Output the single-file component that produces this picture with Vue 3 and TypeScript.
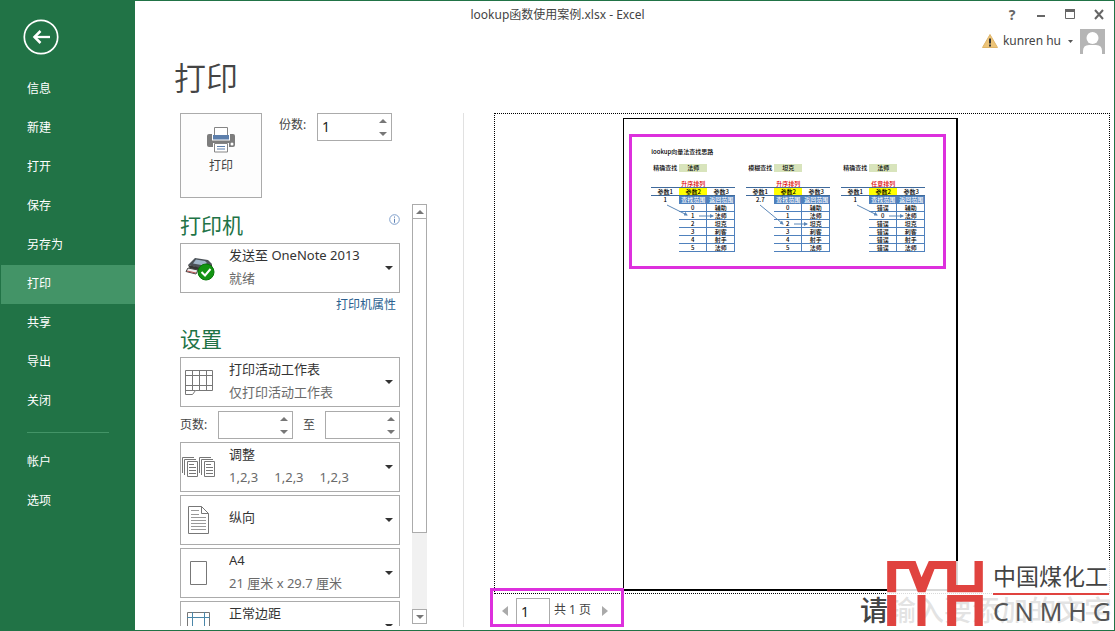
<script setup lang="ts">
import { ref } from 'vue'

interface Lookup {
  mode: string
  result: string
  order: string
  needle: string
  keys: string[]
  arrow: string
  hit: string
}

const menu = ['信息', '新建', '打开', '保存', '另存为', '打印', '共享', '导出', '关闭']
const footerMenu = ['帐户', '选项']
const active = ref('打印')

const copies = ref(1)
const pageFrom = ref<number | ''>('')
const pageTo = ref<number | ''>('')
const currentPage = ref('1')

const roles = ['辅助', '法师', '坦克', '刺客', '射手', '法师']
const lookups: Lookup[] = [
  {
    mode: '精确查找', result: '法师', order: '升序排列', needle: '1',
    keys: ['0', '1', '2', '3', '4', '5'],
    arrow: 'M16 41L36 51', hit: 'M48 52H62',
  },
  {
    mode: '模糊查找', result: '坦克', order: '升序排列', needle: '2.7',
    keys: ['0', '1', '2', '3', '4', '5'],
    arrow: 'M14 41L37 60', hit: 'M48 60H61',
  },
  {
    mode: '精确查找', result: '法师', order: '任意排列', needle: '1',
    keys: ['错误', '0', '错误', '错误', '错误', '错误'],
    arrow: 'M16 41L36 51', hit: 'M48 52H62',
  },
]
</script>

<template>
  <div class="window">
    <header class="titlebar">
      <span class="doc-title">lookup函数使用案例.xlsx - Excel</span>
      <div class="controls">
        <button aria-label="帮助" class="help">?</button>
        <button aria-label="最小化"><svg width="11" height="11" viewBox="0 0 11 11"><path d="M1 7h8" stroke="#666" stroke-width="2" /></svg></button>
        <button aria-label="最大化"><svg width="11" height="11" viewBox="0 0 11 11"><path d="M.5 .5h9v9H.5z" fill="none" stroke="#666" /><path d="M0 1.5h10" stroke="#666" stroke-width="3" /></svg></button>
        <button aria-label="关闭窗口"><svg width="11" height="11" viewBox="0 0 11 11"><path d="M1 1l8 9M9 1l-8 9" stroke="#666" stroke-width="2" /></svg></button>
      </div>
    </header>

    <nav class="sidebar">
      <button class="back" aria-label="返回">
        <svg width="36" height="36" viewBox="0 0 36 36" fill="none" stroke="#fff">
          <circle cx="18" cy="18" r="16.700" stroke-width="1.700" />
          <path d="M27 18H11" stroke-width="2.300" />
          <path d="M17.500 12l-6 6 6 6" stroke-width="2.500" />
        </svg>
      </button>
      <button v-for="m in menu" :key="m" class="nav-item" :class="{ active: m === active }" @click="active = m">{{ m }}</button>
      <hr />
      <button v-for="m in footerMenu" :key="m" class="nav-item" @click="active = m">{{ m }}</button>
    </nav>

    <div class="account">
      <svg width="16" height="14" viewBox="0 0 16 14">
        <path d="M8 .5L15.500 13.500H.5z" fill="#edc478" stroke="#dfb468" />
        <path d="M8 4.500v5M8 10.500v2" stroke="#333" stroke-width="2" />
      </svg>
      <button class="user">kunren hu<svg width="5" height="3" viewBox="0 0 5 3"><path d="M0 0h5L2.500 3z" fill="#555" /></svg></button>
      <svg width="25" height="25" viewBox="0 0 25 25">
        <path d="M0 0h25v25H0z" fill="#b5b5b5" />
        <circle cx="12.500" cy="9" r="6" fill="#fff" />
        <path d="M3 25v-3q0-6 6-6h7q6 0 6 6v3z" fill="#fff" />
      </svg>
    </div>

    <main>
      <h1>打印</h1>
      <div class="content">
        <section class="settings">
          <div class="top">
            <button class="print">
              <svg width="28" height="26" viewBox="0 0 28 26">
                <rect y="7" width="28" height="13" rx="2" fill="#7d7d7d" />
                <path d="M5 6h18v7.500H5z" fill="#fff" />
                <path d="M7.500 .5h13v9h-13z" fill="#fff" stroke="#858585" />
                <path d="M6 8h16v4.500H6z" fill="#5d7fac" />
                <path d="M6 16h16v10H6z" fill="#fff" />
                <path d="M7.500 16.500h13v8.500h-13z" fill="#fff" stroke="#858585" />
                <path d="M10 19.500h8M10 22h8" stroke="#5d7fac" />
                <circle cx="25" cy="17" r="1.500" fill="#fff" />
              </svg>
              <span>打印</span>
            </button>
            <label for="copies">份数:</label>
            <div class="spin">
              <input id="copies" v-model="copies" type="number" min="1" />
              <div class="steps">
                <button aria-label="增加份数" @click="copies++"><i class="up"></i></button>
                <button aria-label="减少份数" @click="copies--"><i class="down"></i></button>
              </div>
            </div>
          </div>

          <div class="scroller">
            <div class="options">
              <div class="heading">
                <h2>打印机</h2>
                <svg width="11" height="11" viewBox="0 0 11 11">
                  <circle cx="5.500" cy="5.500" r="4.800" fill="#fff" stroke="#7f9fcb" />
                  <path d="M5.500 2.500v1.200M5.500 4.800v4" stroke="#5f83b5" />
                </svg>
              </div>
              <div class="card">
                <div class="icon">
                  <svg width="32" height="26" viewBox="0 0 32 26">
                    <path d="M12 3l13 2 4 4-6 6L5 10z" fill="#4b5157" />
                    <path d="M13 4.500l9 1.500 2 2-3 2.500L10 8.500z" fill="#9fb4c8" />
                    <path d="M5 10l18 4 6-5v4l-5 5L7 14z" fill="#353535" />
                    <path d="M5 13l10 2-2 4-10-2.500z" fill="#eee" stroke="#444" />
                    <path d="M4 16l9 2" stroke="#b55" />
                    <circle cx="23" cy="17" r="8" fill="#129412" stroke="#087808" />
                    <path d="M18.500 17l3.500 3.500 5.500-6.500" fill="none" stroke="#fff" stroke-width="2" />
                  </svg>
                </div>
                <div class="text">
                  <select aria-label="打印机"><option>发送至 OneNote 2013</option></select>
                  <span>就绪</span>
                </div>
                <i class="caret"></i>
              </div>
              <div class="link-row"><a href="#">打印机属性</a></div>

              <div class="heading"><h2>设置</h2></div>
              <div class="stack">
                <div class="card">
                  <div class="icon">
                    <svg width="30" height="28" viewBox="0 0 30 28" fill="none" stroke="#777">
                      <path d="M1.500 2.500h27v20h-17l-3 4h-7zM1.500 22.500h10M1.500 7.500h27M1.500 17.500h27M8.500 2.500v20M15.500 2.500v20M22.500 2.500v20" />
                    </svg>
                  </div>
                  <div class="text">
                    <select aria-label="打印范围"><option>打印活动工作表</option></select>
                    <span>仅打印活动工作表</span>
                  </div>
                  <i class="caret"></i>
                </div>

                <div class="pages">
                  <label for="from">页数:</label>
                  <div class="spin">
                    <input id="from" v-model="pageFrom" type="number" />
                    <div class="steps">
                      <button aria-label="增加起始页"><i class="up"></i></button>
                      <button aria-label="减少起始页"><i class="down"></i></button>
                    </div>
                  </div>
                  <label for="to" class="to">至</label>
                  <div class="spin">
                    <input id="to" v-model="pageTo" type="number" />
                    <div class="steps">
                      <button aria-label="增加结束页"><i class="up"></i></button>
                      <button aria-label="减少结束页"><i class="down"></i></button>
                    </div>
                  </div>
                </div>

                <div class="card">
                  <div class="icon">
                    <svg width="34" height="22" viewBox="0 0 34 22" fill="none" stroke="#777">
                      <path d="M.5 17V1.500H12M2.500 19V3.500H14M17.500 17V1.500H29M19.500 19V3.500H31" />
                      <path d="M5.500 5.500h10v15h-10zM22.500 5.500h10v15h-10z" />
                      <path d="M7 8.500h5M7 11.500h7M7 14.500h7M7 17.500h7M24 8.500h5M24 11.500h7M24 14.500h7M24 17.500h7" />
                    </svg>
                  </div>
                  <div class="text">
                    <select aria-label="调整"><option>调整</option></select>
                    <div class="groups"><span>1,2,3</span><span>1,2,3</span><span>1,2,3</span></div>
                  </div>
                  <i class="caret"></i>
                </div>

                <div class="card">
                  <div class="icon">
                    <svg width="22" height="28" viewBox="0 0 22 28" fill="none" stroke="#777">
                      <path d="M.5 .5h13l7 7v20H.5zM13.500 .5v7h7" />
                      <path d="M3 4.500h8M3 8.500h8M3 11.500h15M3 14.500h15M3 17.500h15M3 20.500h15M3 23.500h15" stroke="#999" />
                    </svg>
                  </div>
                  <div class="text single">
                    <select aria-label="方向"><option>纵向</option></select>
                  </div>
                  <i class="caret"></i>
                </div>

                <div class="card">
                  <div class="icon">
                    <svg width="18" height="24" viewBox="0 0 18 24"><path d="M.5 .5h16v23H.5z" fill="#fff" stroke="#777" /></svg>
                  </div>
                  <div class="text">
                    <select aria-label="纸张大小"><option>A4</option></select>
                    <span>21 厘米 x 29.7 厘米</span>
                  </div>
                  <i class="caret"></i>
                </div>

                <div class="card">
                  <div class="icon">
                    <svg width="24" height="28" viewBox="0 0 24 28" fill="none">
                      <path d="M.5 .5h22v27H.5z" stroke="#777" />
                      <path d="M5.500 0v28M17.500 0v28M0 5.500h23M0 22.500h23" stroke="#4a86a8" />
                    </svg>
                  </div>
                  <div class="text">
                    <select aria-label="边距"><option>正常边距</option></select>
                  </div>
                  <i class="caret"></i>
                </div>
              </div>
            </div>

            <div class="scrollbar">
              <button aria-label="向上滚动"><i class="up"></i></button>
              <div class="thumb"></div>
              <div class="track"></div>
              <button aria-label="向下滚动"><i class="down"></i></button>
            </div>
          </div>
        </section>

        <section class="preview">
          <div class="stage">
            <div class="paper">
              <div class="frame">
                <p class="sheet-title">lookup向量法查找思路</p>
                <div class="sheet">
                  <div v-for="(l, n) in lookups" :key="n" class="block">
                    <table class="query">
                      <tbody><tr><td>{{ l.mode }}</td><td class="green">{{ l.result }}</td><td></td></tr></tbody>
                    </table>
                    <table class="grid">
                      <tbody>
                        <tr class="order"><td></td><td>{{ l.order }}</td><td></td></tr>
                        <tr class="params"><td>参数1</td><td class="yellow">参数2</td><td>参数3</td></tr>
                        <tr><td>{{ l.needle }}</td><td class="blue">查找范围</td><td class="blue">返回范围</td></tr>
                        <tr v-for="(r, i) in roles" :key="i"><td></td><td class="cell">{{ l.keys[i] }}</td><td class="cell">{{ r }}</td></tr>
                      </tbody>
                    </table>
                    <svg class="arrows" width="84" height="88" viewBox="0 0 84 88" fill="none" stroke="#5b87b8">
                      <defs>
                        <marker :id="'tip' + n" markerWidth="4" markerHeight="4" refX="3" refY="2" orient="auto"><path d="M0 0l4 2-4 2z" fill="#5b87b8" stroke="none" /></marker>
                      </defs>
                      <path :d="l.arrow" :marker-end="`url(#tip${n})`" />
                      <path :d="l.hit" :marker-end="`url(#tip${n})`" />
                    </svg>
                  </div>
                </div>
              </div>
            </div>
          </div>
          <div class="pager">
            <button aria-label="上一页"><svg width="6" height="10" viewBox="0 0 6 10"><path d="M6 0v10L0 5z" fill="#aaa" /></svg></button>
            <input v-model="currentPage" type="text" aria-label="当前页" />
            <span>共 1 页</span>
            <button aria-label="下一页"><svg width="6" height="10" viewBox="0 0 6 10"><path d="M0 0v10l6-5z" fill="#aaa" /></svg></button>
          </div>
        </section>
      </div>
    </main>

    <div class="hint">请输入要添加的文字</div>
    <div class="brand">
      <svg width="96" height="65" viewBox="80 33 287 195" fill="#e0433f">
        <path d="M80 33H165L183 82L205 33H287V105H342V33H367V127H260V57H222L195 127H172L145 57H107V127H80z" />
        <path d="M80 135h27v93H80zM171 135h24v93h-24zM260 135h107v93h-25v-73h-55v73h-27z" />
      </svg>
      <div class="brand-text">
        <div class="cn">中国煤化工</div>
        <div class="en"><span>C</span><span>N</span><span>M</span><span>H</span><span>G</span></div>
      </div>
    </div>
  </div>
</template>

<style>
body {
  margin: 0;
}
</style>

<style scoped>
* {
  box-sizing: border-box;
}
.window {
  position: relative;
  display: grid;
  grid-template-columns: 134px minmax(0, 1fr);
  grid-template-rows: 27px 26px minmax(0, 1fr);
  height: 100vh;
  overflow: hidden;
  border: 1px solid #217346;
  background: #fff;
  color: #444;
  font: 13px/24px 'Noto Sans', 'Noto Sans CJK SC', sans-serif;
}
button,
input,
select {
  margin: 0;
  padding: 0;
  border: 0;
  background: none;
  color: inherit;
  font: inherit;
  appearance: none;
}
button {
  display: flex;
  align-items: center;
  justify-content: center;
}
svg {
  display: block;
  flex: none;
}
.titlebar {
  grid-area: 1 / 1 / 2 / 3;
  display: grid;
  grid-template-columns: 1fr auto 1fr;
  align-items: center;
  font-size: 12px;
}
.doc-title {
  grid-column: 2;
}
.controls {
  display: flex;
  justify-content: flex-end;
  gap: 9px;
  padding-right: 5px;
}
.controls button {
  width: 20px;
  height: 20px;
}
.controls .help {
  font-size: 14px;
  font-weight: 700;
  color: #666;
}
.sidebar {
  grid-area: 1 / 1 / 4 / 2;
  background: #217346;
  color: #fff;
}
.back {
  margin: 18px 0 15px 22px;
}
.nav-item {
  width: 100%;
  height: 39px;
  justify-content: flex-start;
  padding: 0 0 2px 26px;
  font-size: 12px;
}
.nav-item.active {
  background: #439467;
}
.sidebar hr {
  height: 1px;
  margin: 11px 26px 10px;
  border: 0;
  background: #439467;
}
.account {
  grid-area: 2 / 2;
  display: flex;
  align-items: center;
  justify-content: flex-end;
  gap: 5px;
  padding-right: 9px;
}
.user {
  gap: 7px;
  padding-right: 2px;
  font-size: 12px;
}
main {
  grid-area: 3 / 2;
  display: flex;
  flex-direction: column;
  padding: 0 4px 3px 45px;
}
h1 {
  margin: 0 0 11px -6px;
  font-size: 32px;
  line-height: 48px;
  font-weight: 350;
}
.content {
  flex: 1;
  min-height: 0;
  display: flex;
}
.settings {
  width: 284px;
  flex: none;
  display: flex;
  flex-direction: column;
  gap: 6px;
  padding-bottom: 1px;
  border-right: 1px solid #e1e1e1;
}
.top {
  display: flex;
  align-items: flex-start;
}
.top label {
  width: 55px;
  padding-left: 17px;
}
.print {
  width: 82px;
  height: 85px;
  flex-direction: column;
  gap: 1px;
  padding-bottom: 7px;
  border: 1px solid #ababab;
  background: #fdfdfd;
  font-size: 12px;
}
label {
  font-size: 12px;
}
.spin {
  display: flex;
  width: 75px;
  height: 28px;
  border: 1px solid #ababab;
}
.spin input {
  flex: 1;
  min-width: 0;
  padding-left: 4px;
  font-size: 14px;
  color: #222;
  appearance: textfield;
}
.spin input::-webkit-inner-spin-button {
  display: none;
}
.steps {
  width: 16px;
}
.steps button {
  width: 16px;
  height: 13px;
}
.up,
.down {
  border: 4px solid transparent;
}
.up {
  border-top: 0;
  border-bottom-color: #777;
}
.down {
  border-bottom: 0;
  border-top-color: #777;
}
.scroller {
  flex: 1;
  min-height: 0;
  display: flex;
  gap: 12px;
}
.options {
  width: 220px;
  overflow: hidden;
}
.heading {
  display: flex;
  justify-content: space-between;
  height: 39px;
  padding-top: 5px;
}
.heading svg {
  margin-top: 5px;
}
h2 {
  margin: 0;
  font-size: 21px;
  line-height: 32px;
  font-weight: 400;
  color: #217346;
}
.card {
  display: flex;
  align-items: center;
  height: 50px;
  border: 1px solid #ababab;
  background: #fff;
}
.icon {
  width: 36px;
  display: flex;
  justify-content: center;
}
.text {
  flex: 1;
  align-self: stretch;
  padding-left: 12px;
  color: #6a6a6a;
}
.text.single {
  padding-top: 10px;
}
.text select {
  display: block;
  width: 100%;
  height: 22px;
  line-height: 22px;
  color: #333;
}
.text span {
  display: block;
}
.groups {
  display: flex;
  gap: 16px;
}
.caret {
  margin-right: 6px;
  border: 4px solid transparent;
  border-top-color: #333;
  border-bottom: 0;
}
.link-row {
  height: 25px;
  padding-right: 4px;
  text-align: right;
  font-size: 12px;
}
a {
  color: #2b5f8f;
  text-decoration: none;
}
.stack {
  display: flex;
  flex-direction: column;
  gap: 3px;
}
.pages {
  display: flex;
  align-items: flex-end;
  height: 29px;
}
.pages label {
  width: 38px;
  line-height: 28px;
}
.pages .to {
  width: 32px;
  text-align: center;
}
.scrollbar {
  width: 15px;
  display: flex;
  flex-direction: column;
  padding-bottom: 2px;
}
.scrollbar button {
  height: 15px;
  border: 1px solid #ababab;
}
.thumb {
  flex: 314;
  border: 1px solid #ababab;
  border-top: 0;
}
.track {
  flex: 76;
  background: #f1f1f1;
}
.preview {
  flex: 1;
  min-width: 0;
  display: flex;
  flex-direction: column;
  padding-left: 30px;
}
.stage {
  flex: 1;
  min-height: 0;
  display: flex;
  justify-content: center;
  padding: 4px 23px 2px 0;
  border: 1px dotted #000;
}
.paper {
  aspect-ratio: 210 / 297;
  border: solid #000;
  border-width: 1px 2px 2px 1px;
  background: #fff;
}
.frame {
  margin: 15px 10px 0 5px;
  padding: 11px 16px 14px 19px;
  border: 3px solid #dd30dd;
  color: #000;
  font: 500 6px/8px 'Noto Sans CJK SC', sans-serif;
}
.sheet-title {
  margin: 0 0 8px;
}
.sheet {
  display: flex;
  gap: 11px;
}
.block {
  position: relative;
  width: 84px;
}
table {
  width: 84px;
  table-layout: fixed;
  border-collapse: separate;
  border-spacing: 0;
  text-align: center;
}
.query {
  margin-bottom: 8px;
}
td {
  height: 8px;
  padding: 0;
  line-height: 7px;
  white-space: nowrap;
  border-bottom: 1px solid transparent;
}
.green {
  background: #d8e4bc;
}
.order td {
  color: #e00000;
  border-bottom-color: #3f6a9c;
}
.params td {
  border-bottom-color: #3f6a9c;
}
td.yellow {
  background: #ff0;
}
td.blue {
  background: #4f81bd;
  color: #fff;
}
td.cell {
  border-right: 1px solid #4f81bd;
  border-bottom-color: #4f81bd;
}
.arrows {
  position: absolute;
  left: 0;
  top: 0;
}
.pager {
  display: flex;
  align-items: flex-end;
  width: 134px;
  height: 39px;
  margin: -6px 0 0 -4px;
  padding-left: 9px;
  border: 3px solid #dd30dd;
}
.pager button {
  width: 6px;
  height: 27px;
}
.pager input {
  width: 34px;
  height: 26px;
  margin: 0 4px 0 8px;
  padding-left: 4px;
  border: 1px solid #ababab;
  border-bottom: 0;
  font-size: 14px;
  color: #222;
}
.pager span {
  width: 48px;
  line-height: 28px;
  font-size: 12px;
}
.hint {
  position: absolute;
  right: 2px;
  bottom: 0;
  font-size: 28px;
  line-height: 40px;
  font-weight: 500;
  color: #444;
  white-space: nowrap;
}
.brand {
  position: absolute;
  right: 0;
  bottom: 0;
  display: flex;
  gap: 10px;
  width: 227px;
  height: 69px;
  background: rgba(255, 255, 255, 0.85);
}
.brand-text {
  flex: 1;
}
.cn {
  height: 34px;
  margin-right: 5px;
  border-bottom: 2px solid #e0433f;
  font-size: 23px;
  line-height: 30px;
}
.en {
  display: flex;
  justify-content: space-between;
  padding-right: 3px;
  font-size: 25px;
  line-height: 32px;
  color: #555;
}
</style>
